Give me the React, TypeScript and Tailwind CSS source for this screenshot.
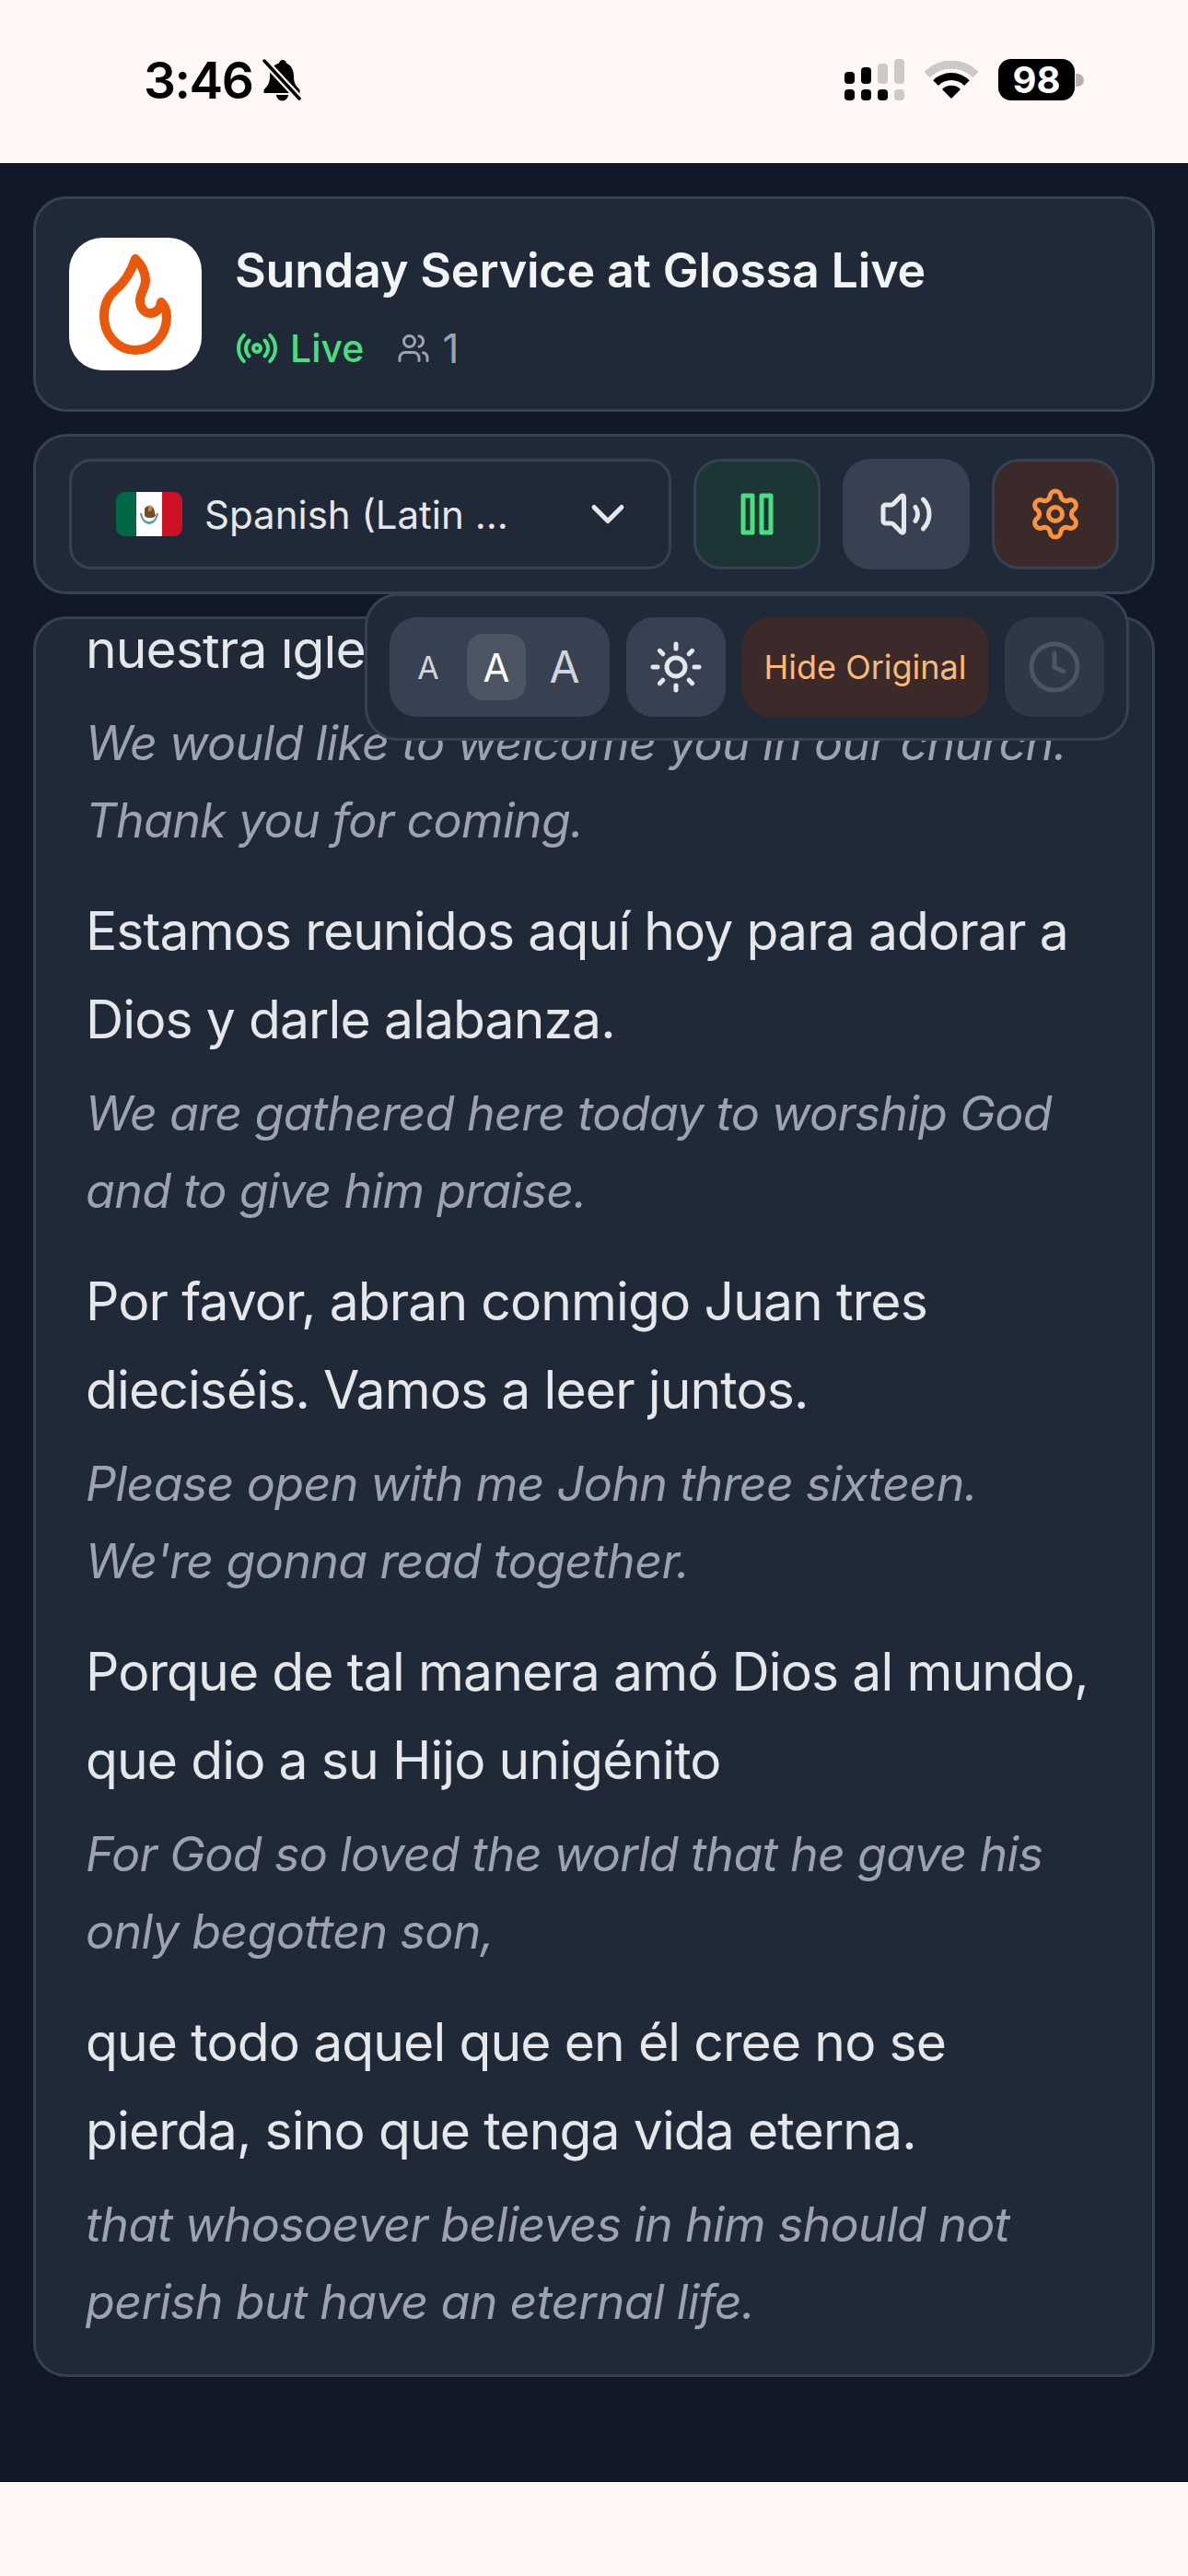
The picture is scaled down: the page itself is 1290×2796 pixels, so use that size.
import React from "react";
import { ChevronDown, Clock, Radio, Settings, Sun, Users, Volume2 } from "lucide-react";

const lines = [
  {
    es: ["Estamos reunidos aquí hoy para adorar a", "Dios y darle alabanza."],
    en: ["We are gathered here today to worship God", "and to give him praise."],
  },
  {
    es: ["Por favor, abran conmigo Juan tres", "dieciséis. Vamos a leer juntos."],
    en: ["Please open with me John three sixteen.", "We're gonna read together."],
  },
  {
    es: ["Porque de tal manera amó Dios al mundo,", "que dio a su Hijo unigénito"],
    en: ["For God so loved the world that he gave his", "only begotten son,"],
  },
  {
    es: ["que todo aquel que en él cree no se", "pierda, sino que tenga vida eterna."],
    en: ["that whosoever believes in him should not", "perish but have an eternal life."],
  },
];

const StatusBar = () => (
  <div className="h-[177px] bg-[#fff7f5] flex items-start justify-between pl-[156px] pr-[113px] pt-[64px]">
    <div className="h-[45px] flex items-center gap-[11px]">
      <span className="text-[55px] leading-[60px] font-semibold tracking-[-1.5px] text-black">3:46</span>
      <svg width="42" height="46" viewBox="0 0 42 46">
        <path d="M22 1c-2 0-3.500 1.500-4 3.500C11 6.500 8 12 8 19c0 7-2 10-6.500 14.500V37h39v-3.500C36 29 34 26 34 19c0-7-3-12.500-8-14.500C25.500 2.500 24 1 22 1z" fill="#000" />
        <path d="M15 39a6.500 6.500 0 0 0 13 0z" fill="#000" />
        <path d="M2 2l38 41" stroke="#fff7f5" strokeWidth="8" />
        <path d="M2 2l38 41" stroke="#000" strokeWidth="3.500" strokeLinecap="round" />
      </svg>
    </div>
    <div className="h-[45px] flex items-center gap-[22px]">
      <svg width="65" height="45" viewBox="0 0 65 45">
        <g fill="#000">
          <rect x="0" y="14" width="11" height="13" rx="4" />
          <rect x="18" y="9" width="11" height="18" rx="4" />
          <rect x="0" y="33" width="11" height="12" rx="4" />
          <rect x="18" y="33" width="11" height="12" rx="4" />
          <rect x="36" y="33" width="11" height="12" rx="4" />
        </g>
        <g fill="#cdc9c6">
          <rect x="36" y="5" width="11" height="22" rx="4" />
          <rect x="54" y="0" width="11" height="27" rx="4" />
          <rect x="54" y="33" width="11" height="12" rx="4" />
        </g>
      </svg>
      <svg width="58" height="41" viewBox="0 0 58 41">
        <path d="M0 12A41 41 0 0 1 58 12L52.300 17.700A33 33 0 0 0 5.700 17.700Z" fill="#cdc9c6" stroke="#cdc9c6" strokeWidth="1" strokeLinejoin="round" />
        <path d="M9.200 21.200A28 28 0 0 1 48.800 21.200L43.100 26.900A20 20 0 0 0 14.900 26.900Z" fill="#000" />
        <path d="M19 31A14 14 0 0 1 39 31L29 41Z" fill="#000" />
      </svg>
      <div className="flex items-center gap-[1px]">
        <div className="w-[83px] h-[45px] rounded-[14px] bg-black text-white flex items-center justify-center text-[40px] font-bold leading-none">
          98
        </div>
        <div className="w-[9px] h-[14px] rounded-r-full bg-[#b5b1af]" />
      </div>
    </div>
  </div>
);

const IconBtn = ({ className, children }: { className: string; children: React.ReactNode }) => (
  <div className={`w-[138px] h-[120px] rounded-[30px] flex items-center justify-center ${className}`}>
    {children}
  </div>
);

export default function App() {
  return (
    <div className="w-[1290px] h-[2796px] bg-[#fff7f5] overflow-hidden font-['Inter',sans-serif]">
      <StatusBar />
      <div className="h-[2517px] bg-[#111827] px-[36px] pt-[36px] flex flex-col">
        {/* header card */}
        <div className="h-[234px] shrink-0 rounded-[36px] border-[3px] border-[#374151] bg-[#1f2937] px-[36px] pt-[42px] flex gap-[36px]">
          <div className="w-[144px] h-[144px] rounded-[36px] bg-white flex items-center justify-center">
            <svg width="78" height="109" viewBox="0 0 78 109" fill="none">
              <path
                d="M39 5C34 20 28 30 17 39C9 46 5 56 5 67C5 88 20 104 39 104C58 104 73 88 73 68C73 61 71 56 67 52C66 59 62 64 55 64C48 64 44 57 44 50C44 42 50 37 50 28C50 18 44 10 39 5Z"
                stroke="#ea580c"
                strokeWidth="10"
                strokeLinejoin="round"
              />
            </svg>
          </div>
          <div className="flex flex-col">
            <div className="text-[52px] leading-[72px] font-semibold tracking-[-0.2px] text-[#f3f4f6]">
              Sunday Service at Glossa Live
            </div>
            <div className="flex items-center mt-[18px]">
              <Radio size={48} color="#4ade80" strokeWidth={2} />
              <span className="text-[41px] leading-[60px] font-medium text-[#4ade80] ml-[12px]">Live</span>
              <Users size={36} color="#9ca3af" strokeWidth={2} className="ml-[36px]" />
              <span className="text-[44px] leading-[60px] text-[#9ca3af] ml-[13px]">1</span>
            </div>
          </div>
        </div>

        {/* controls */}
        <div className="h-[174px] shrink-0 mt-[24px] rounded-[36px] border-[3px] border-[#374151] bg-[#1f2937] pl-[36px] pr-[36px] flex items-center gap-[24px]">
          <div className="w-[654px] h-[120px] rounded-[24px] border-[3px] border-[#374151] flex items-center pl-[48px] pr-[36px]">
            <svg width="72" height="48" viewBox="0 0 72 48" className="rounded-[9px] shrink-0">
              <rect width="22" height="48" fill="#006847" />
              <rect x="22" width="28" height="48" fill="#fff" />
              <rect x="50" width="22" height="48" fill="#ce1126" />
              <path d="M31 18c2-4 8-4 10 0l2 8c-3 3-9 3-12 0z" fill="#7a4a22" />
              <path d="M35 15c2-1 4 0 5 2l-2 4h-3z" fill="#b98a4e" />
              <path d="M27 23c1 8 6 11 9 11s8-3 9-11" stroke="#5f9a7c" strokeWidth="2" fill="none" />
              <path d="M31 31c3 2 7 2 10 0" stroke="#5a9fc0" strokeWidth="1.500" fill="none" />
            </svg>
            <span className="ml-[24px] text-[42px] text-[#e5e7eb] flex-1">Spanish (Latin ...</span>
            <ChevronDown size={60} color="#e5e7eb" />
          </div>
          <IconBtn className="border-[3px] border-[#374151] bg-[#1c3636]">
            <svg width="60" height="60" viewBox="0 0 24 24" fill="none" stroke="#4ade80" strokeWidth="2" strokeLinejoin="round">
              <rect x="6" y="4" width="4" height="16" />
              <rect x="14" y="4" width="4" height="16" />
            </svg>
          </IconBtn>
          <IconBtn className="bg-[#374151]">
            <Volume2 size={60} color="#e5e7eb" />
          </IconBtn>
          <IconBtn className="border-[3px] border-[#374151] bg-[#3c2a2b]">
            <Settings size={60} color="#fb923c" />
          </IconBtn>
        </div>

        {/* transcript */}
        <div className="mt-[24px] h-[1911px] shrink-0 rounded-[36px] border-[3px] border-[#374151] bg-[#1f2937] px-[54px] py-[18px]">
          <div className="h-full overflow-hidden">
            <div className="text-[57px] leading-[96px] tracking-[-0.9px] text-[#e5e7eb] mt-[-33px] whitespace-nowrap">nuestra iglesia.</div>
            <div className="text-[52px] leading-[84px] tracking-[-0.7px] italic text-[#9ca3af] mt-[12px] whitespace-nowrap">
              <div>We would like to welcome you in our church.</div>
              <div>Thank you for coming.</div>
            </div>
            {lines.map((l, i) => (
              <div key={i} className="mt-[30px]">
                <div className="text-[57px] leading-[96px] tracking-[-0.9px] text-[#e5e7eb] whitespace-nowrap">
                  {l.es.map((t) => (
                    <div key={t}>{t}</div>
                  ))}
                </div>
                <div className="text-[52px] leading-[84px] tracking-[-0.7px] italic text-[#9ca3af] mt-[12px] whitespace-nowrap">
                  {l.en.map((t) => (
                    <div key={t}>{t}</div>
                  ))}
                </div>
              </div>
            ))}
          </div>
        </div>
      </div>
      {/* popover over the transcript */}
      <div className="absolute left-[396px] top-[644px] w-[830px] h-[160px] rounded-[36px] border-[3px] border-[#374151] bg-[#1f2937] flex items-center pl-[24px] gap-[18px]">
        <div className="w-[239px] h-[108px] rounded-[30px] bg-[#374151] flex items-center pl-[10px] gap-[10px]">
          <span className="w-[64px] text-center text-[34px] text-[#d1d5db]">A</span>
          <span className="w-[64px] h-[72px] rounded-[18px] bg-[#4b5563] flex items-center justify-center text-[42px] text-white">A</span>
          <span className="w-[64px] text-center text-[48px] text-[#d1d5db]">A</span>
        </div>
        <div className="w-[108px] h-[108px] rounded-[30px] bg-[#374151] flex items-center justify-center">
          <Sun size={60} color="#e5e7eb" />
        </div>
        <div className="w-[267px] h-[108px] rounded-[30px] bg-[#3c2a2b] flex items-center justify-center text-[36px] text-[#fdba74]">
          Hide Original
        </div>
        <div className="w-[108px] h-[108px] rounded-[30px] bg-[#2f3946] flex items-center justify-center">
          <Clock size={60} color="#4b5563" />
        </div>
      </div>
    </div>
  );
}
